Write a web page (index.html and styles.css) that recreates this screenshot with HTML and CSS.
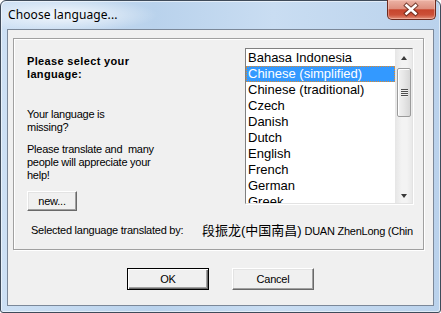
FILE: index.html
```html
<!DOCTYPE html>
<html>
<head>
<meta charset="utf-8">
<link rel="stylesheet" href="styles.css">
</head>
<body>
<div class="window">
  <div class="titlebar">
    <span class="title">Choose language...</span>
    <div class="close">
      <svg width="47" height="19" viewBox="0 0 47 19">
        <path d="M18.5 5.5 L27.5 13.5 M27.5 5.5 L18.5 13.5" stroke="#5a2418" stroke-width="4.6" stroke-linecap="square" fill="none" opacity="0.75"/>
        <path d="M18.5 5.5 L27.5 13.5 M27.5 5.5 L18.5 13.5" stroke="#ffffff" stroke-width="2.6" stroke-linecap="square" fill="none"/>
      </svg>
    </div>
  </div>
  <div class="client">
    <div class="group">
      <div class="top-row">
        <div class="intro">
          <p class="heading">Please select your<br>language:</p>
          <p class="note note-missing">Your language is<br>missing?</p>
          <p class="note note-help">Please translate and&nbsp; many<br>people will appreciate your<br>help!</p>
          <button class="btn btn-new">new...</button>
        </div>
        <div class="listbox">
          <ul class="items">
            <li>Bahasa Indonesia</li>
            <li class="selected">Chinese (simplified)</li>
            <li>Chinese (traditional)</li>
            <li>Czech</li>
            <li>Danish</li>
            <li>Dutch</li>
            <li>English</li>
            <li>French</li>
            <li>German</li>
            <li>Greek</li>
          </ul>
          <div class="scrollbar">
            <div class="arrow arrow-up"><span class="tri tri-up"></span></div>
            <div class="track">
              <div class="thumb"><span class="grip"></span></div>
            </div>
            <div class="arrow arrow-down"><span class="tri tri-down"></span></div>
          </div>
        </div>
      </div>
      <div class="credit">
        <span class="credit-label">Selected language translated by:</span>
        <span class="credit-name"><span class="cjk">段振龙(中国南昌)</span> DUAN ZhenLong (China)</span>
      </div>
    </div>
    <div class="actions">
      <button class="btn btn-default">OK</button>
      <button class="btn">Cancel</button>
    </div>
  </div>
</div>
</body>
</html>
```

FILE: styles.css
```css
* { box-sizing: border-box; }

html, body {
  margin: 0;
  padding: 0;
}

body {
  width: 441px;
  height: 313px;
  overflow: hidden;
  background: #ffffff;
  font-family: "Liberation Sans", Arial, sans-serif;
  font-size: 11px;
  letter-spacing: -0.25px;
  color: #000;
}

.window {
  position: relative;
  width: 441px;
  height: 313px;
  border: 1px solid #3f4b5a;
  border-radius: 6px 6px 3px 3px;
  display: flex;
  flex-direction: column;
  background:
    radial-gradient(ellipse 95px 17px at 62px 14px, rgba(255,255,255,0.8), rgba(255,255,255,0)),
    linear-gradient(to right, #cde0f4 0%, #b9d2ec 35%, #c9ddf2 62%, #bad2ec 100%);
  box-shadow: inset 1px 1px 0 rgba(255,255,255,0.55), inset -1px -1px 0 rgba(255,255,255,0.55);
}

.titlebar {
  height: 28px;
  flex: 0 0 28px;
}

.title {
  display: block;
  padding: 6px 0 0 7px;
  font-family: "Noto Sans", "Open Sans", sans-serif;
  font-size: 12px;
  letter-spacing: 0.1px;
  line-height: 16px;
  color: #000;
}

.close {
  position: absolute;
  top: -1px;
  right: 4px;
  width: 49px;
  height: 20px;
  border: 1px solid #6b2a1e;
  border-top: none;
  border-radius: 0 0 5px 5px;
  background: linear-gradient(to bottom, #ebb3a5 0%, #de907f 45%, #c7452d 52%, #cc5038 78%, #e2907a 100%);
  box-shadow: inset 0 0 0 1px rgba(255,210,200,0.45);
}

.close svg {
  display: block;
}

.client {
  flex: 1;
  margin: 0 6px 6px 6px;
  border: 1px solid #7b8899;
  background: #f0f0f0;
  display: flex;
  flex-direction: column;
}

.group {
  margin: 8px 9px 0 5px;
  height: 212px;
  flex: 0 0 212px;
  border: 1px solid #a0a0a0;
  box-shadow: inset 1px 1px 0 #ffffff, 1px 1px 0 #ffffff;
  padding: 9px 0 0 13px;
}

.top-row {
  display: flex;
  align-items: flex-start;
  height: 156px;
}

.intro {
  flex: 0 0 218px;
  padding-top: 7px;
}

.intro p {
  margin: 0;
  line-height: 13px;
}

.heading {
  font-weight: bold;
  letter-spacing: 0.35px;
}

.note-missing {
  margin-top: 27px !important;
}

.note-help {
  margin-top: 9px !important;
}

.btn {
  display: block;
  padding: 0;
  margin: 0;
  font-family: "Liberation Sans", Arial, sans-serif;
  font-size: 11px;
  letter-spacing: -0.2px;
  color: #000;
  background: #f0f0f0;
  border: 1px solid;
  border-color: #ffffff #696969 #696969 #ffffff;
  box-shadow: inset -1px -1px 0 #a0a0a0, inset 1px 1px 0 #e3e3e3;
  border-radius: 0;
}

.btn-new {
  margin-top: 9px;
  width: 50px;
  height: 20px;
}

.listbox {
  flex: 0 0 168px;
  width: 168px;
  height: 156px;
  display: flex;
  border: 1px solid;
  border-color: #7f7f7f #e3e3e3 #e3e3e3 #7f7f7f;
  box-shadow: 1px 1px 0 #ffffff;
  background: #ffffff;
  overflow: hidden;
}

.items {
  flex: 1;
  margin: 0;
  padding: 1px 0 0 0;
  list-style: none;
  overflow: hidden;
  font-size: 13px;
  letter-spacing: 0;
  line-height: 16px;
}

.items li {
  height: 16px;
  padding-left: 2px;
  white-space: nowrap;
}

.items li.selected {
  background: #3399ff;
  color: #ffffff;
  outline: 1px dotted #e08a2a;
  outline-offset: -1px;
}

.scrollbar {
  flex: 0 0 17px;
  display: flex;
  flex-direction: column;
  background: linear-gradient(to right, #e6e6e6, #f3f3f3 40%, #f3f3f3 70%, #e9e9e9);
}

.arrow {
  flex: 0 0 17px;
  display: flex;
  align-items: center;
  justify-content: center;
}

.tri {
  display: block;
  width: 0;
  height: 0;
  border-left: 3.5px solid transparent;
  border-right: 3.5px solid transparent;
}

.tri-up {
  border-bottom: 4px solid #3a3a3a;
  margin-top: 1px;
}

.tri-down {
  border-top: 4px solid #3a3a3a;
  margin-top: 2px;
}

.track {
  flex: 1;
  padding-top: 2px;
}

.thumb {
  margin: 0 1px 0 2px;
  height: 49px;
  border: 1px solid #9b9b9b;
  border-radius: 2px;
  background: linear-gradient(to right, #f2f2f2, #e6e6e6 50%, #d6d6d6);
  box-shadow: inset 1px 1px 0 #ffffff;
  display: flex;
  align-items: center;
  justify-content: center;
}

.grip {
  display: block;
  width: 7px;
  height: 8px;
  background: repeating-linear-gradient(to bottom, #4d4d4d 0 1px, #eeeeee 1px 2px);
}

.credit {
  margin: 20px 0 0 4px;
  display: flex;
  line-height: 13px;
  height: 14px;
}

.credit-label {
  flex: 0 0 171px;
}

.credit-name {
  flex: 0 0 211px;
  width: 211px;
  overflow: hidden;
  white-space: nowrap;
}

.cjk {
  font-family: "Liberation Sans", "Noto Sans CJK SC", sans-serif;
  font-size: 13px;
  letter-spacing: 0;
}

.actions {
  display: flex;
  justify-content: center;
  gap: 23px;
  margin-top: 18px;
}

.actions .btn {
  width: 82px;
  height: 22px;
}

.btn-default {
  border: 1px solid #000000;
  box-shadow: inset 1px 1px 0 #ffffff, inset -1px -1px 0 #696969, inset -2px -2px 0 #a0a0a0;
}
```
